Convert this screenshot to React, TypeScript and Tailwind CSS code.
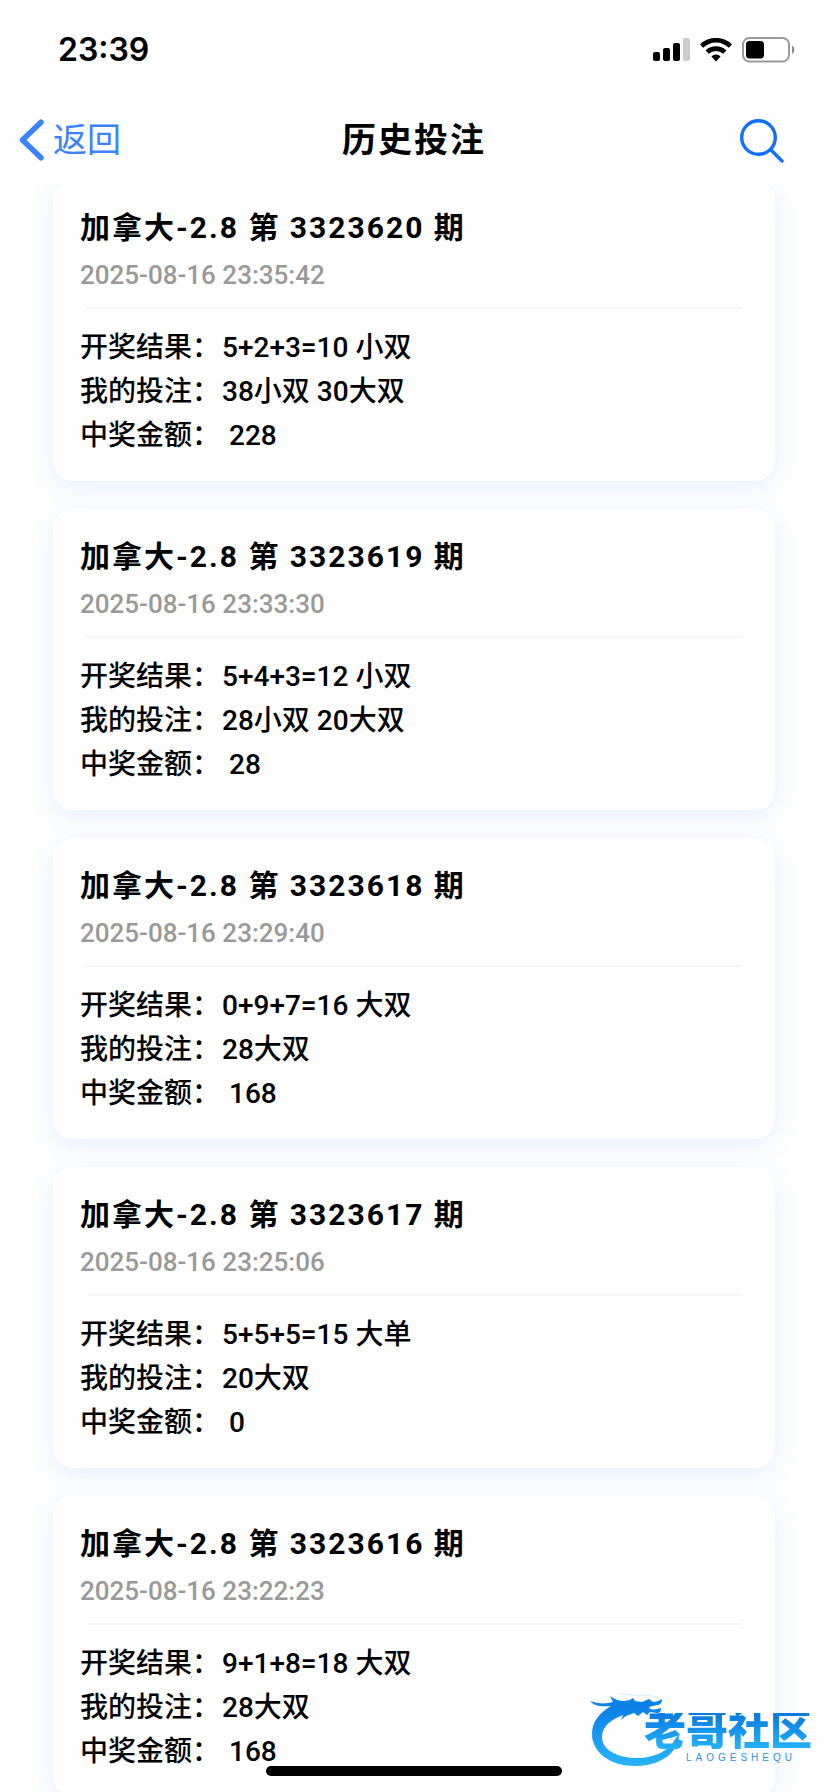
const records = [
  { issue: "3323620", time: "2025-08-16 23:35:42", result: "5+2+3=10 小双", bet: "38小双 30大双", prize: "228" },
  { issue: "3323619", time: "2025-08-16 23:33:30", result: "5+4+3=12 小双", bet: "28小双 20大双", prize: "28" },
  { issue: "3323618", time: "2025-08-16 23:29:40", result: "0+9+7=16 大双", bet: "28大双", prize: "168" },
  { issue: "3323617", time: "2025-08-16 23:25:06", result: "5+5+5=15 大单", bet: "20大双", prize: "0" },
  { issue: "3323616", time: "2025-08-16 23:22:23", result: "9+1+8=18 大双", bet: "28大双", prize: "168" },
];

function StatusBar() {
  return (
    <div className="flex h-24 items-center justify-between pr-[33px] pl-[58px] pt-1">
      <span className="font-['Inter',sans-serif] text-[32px] font-semibold leading-10">23:39</span>
      <div className="flex items-center gap-[10px]">
        <svg width="37" height="24" viewBox="0 0 37 24" aria-hidden="true">
          <rect x="0" y="14" width="7" height="9" rx="2" />
          <rect x="10" y="10" width="7" height="13" rx="2" />
          <rect x="20" y="5" width="7" height="18" rx="2" />
          <rect x="30" y="0" width="7" height="23" rx="2" fill="#cbcbcb" />
        </svg>
        <svg width="32" height="24" viewBox="0 0 32 24" aria-hidden="true">
          <path d="M0 6.4a23 23 0 0 1 32 0l-3.1 3.4a18.5 18.5 0 0 0-25.8 0Z" />
          <path d="M5.6 12.4a15 15 0 0 1 20.8 0l-3.2 3.4a10.5 10.5 0 0 0-14.4 0Z" />
          <path d="M11.4 18.4a6.8 6.8 0 0 1 9.2 0L16 23.4Z" />
        </svg>
        <svg width="53" height="26" viewBox="0 0 53 26" aria-hidden="true">
          <rect x="1" y="1" width="46" height="23.5" rx="6.5" fill="none" stroke="#9b9b9b" strokeWidth="2" />
          <rect x="4" y="4" width="18" height="17.5" rx="3.5" />
          <path d="M50 8.5a5 5 0 0 1 0 8.5Z" fill="#8a8a8a" />
        </svg>
      </div>
    </div>
  );
}

function NavBar() {
  return (
    <div className="grid h-[88px] grid-cols-[1fr_auto_1fr] items-center px-[18px]">
      <button type="button" className="flex items-center gap-2 justify-self-start text-[34px] leading-10 text-[#3a82ff]">
        <svg width="27" height="42" viewBox="0 0 27 42" fill="none" stroke="currentColor" strokeWidth="5.5" strokeLinecap="round" strokeLinejoin="round" aria-hidden="true">
          <path d="M23 3.2 4.5 21 23 38.8" />
        </svg>
        返回
      </button>
      <h1 className="text-[34px] font-bold leading-10 tracking-[2px]">历史投注</h1>
      <button type="button" aria-label="搜索" className="mr-[26px] justify-self-end text-[#0f70ff]">
        <svg width="46" height="46" viewBox="0 0 46 46" fill="none" stroke="currentColor" strokeWidth="3.4" strokeLinecap="round" aria-hidden="true">
          <circle cx="20.5" cy="20.5" r="16.8" />
          <path d="m33 33 11 11" />
        </svg>
      </button>
    </div>
  );
}

function RecordCard({ record }: { record: (typeof records)[number] }) {
  return (
    <article className="rounded-[20px] bg-[#fefefe] px-[27px] pt-[27px] pb-[23px] shadow-[0_6px_24px_rgba(58,130,255,0.12)]">
      <h2 className="text-[30px] font-bold leading-[42px] tracking-[2px]">加拿大-2.8 第 {record.issue} 期</h2>
      <time className="mt-2 block text-[26px] font-medium leading-9 text-[#999999]">{record.time}</time>
      <hr className="mx-[6px] mt-[14px] border-t-2 border-[#f6f6f6]" />
      <dl className="mt-[17px] text-[28px] font-medium leading-[44px]">
        <div className="flex gap-[2px]">
          <dt>开奖结果：</dt>
          <dd>{record.result}</dd>
        </div>
        <div className="flex gap-[2px]">
          <dt>我的投注：</dt>
          <dd>{record.bet}</dd>
        </div>
        <div className="flex gap-[9px]">
          <dt>中奖金额：</dt>
          <dd>{record.prize}</dd>
        </div>
      </dl>
    </article>
  );
}

function CommunityMark() {
  return (
    <div className="pointer-events-none absolute right-4 bottom-6 h-[78px] w-[222px]">
      <svg className="absolute inset-0" width="92" height="78" viewBox="0 0 92 78" aria-hidden="true">
        <defs>
          <linearGradient id="dragon" x1="0" y1="0" x2="0" y2="1">
            <stop offset="0.15" stopColor="#0b80e6" />
            <stop offset="1" stopColor="#29b4fb" />
          </linearGradient>
        </defs>
        <path
          fill="url(#dragon)"
          d="M0 11c8 3 16 3 23 1l-3-6c4 3 9 5 14 5l6-1 3-2 2 3 7 1 7-3 4 3c3 0 6-1 9-3 0 4-2 6-5 6l-8 2 1 2c4 1 8 0 11-1 0 3-1 5-4 5l-7-1-3 3-4-3-5 4-4-3-8 3-5 4 2-5c-12 5-21 11-21 22 0 14 17 21 35 21 19 0 33-8 39-20l3-4c0 19-19 32-44 32C21 76 2 63 2 44 2 32 9 23 21 16 12 17 4 16 0 11Z"
        />
        <path d="M29 3c15 5 28-1 43 6" fill="none" stroke="#b9ddf8" strokeWidth="1" opacity="0.6" />
      </svg>
      <div className="absolute top-[23px] right-0 flex flex-col items-end">
        <span className="bg-linear-to-b from-[#0a78dc] to-[#27b2fa] bg-clip-text text-[42px] font-black leading-9 text-transparent">
          老哥社区
        </span>
        <span className="mt-1 mr-4 font-['Liberation_Sans',sans-serif] text-[10px] leading-[10px] tracking-[4px] text-[#2f93e2]">
          LAOGESHEQU
        </span>
      </div>
    </div>
  );
}

export default function App() {
  return (
    <div className="relative flex h-screen flex-col overflow-hidden bg-[#fefefe] font-['Roboto','Noto_Sans_CJK_SC',sans-serif] text-black">
      <header className="shrink-0">
        <StatusBar />
        <NavBar />
      </header>
      <main className="flex-1 overflow-y-auto px-[53px] [scrollbar-width:none]">
        <div className="-mt-1 flex flex-col gap-7">
          {records.map((record) => (
            <RecordCard key={record.issue} record={record} />
          ))}
        </div>
      </main>
      <div className="absolute bottom-4 left-1/2 h-[10px] w-[296px] -translate-x-1/2 rounded-full bg-black" />
      <CommunityMark />
    </div>
  );
}
